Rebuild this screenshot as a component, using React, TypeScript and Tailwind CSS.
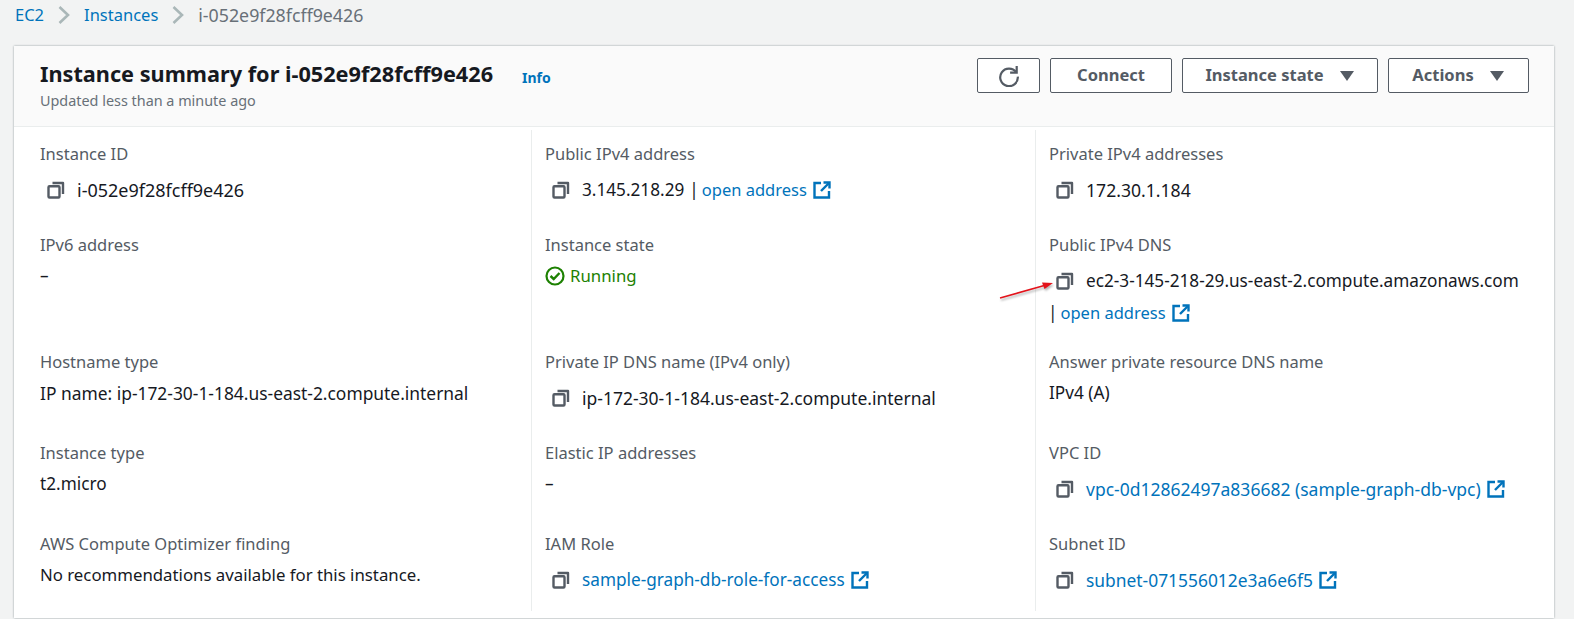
import React from "react";

type Cell = {
  label: string;
  value?: string;
  copy?: boolean;
  link?: string;
  address?: boolean;
  running?: boolean;
  size?: string;
};

const CopyIcon = () => (
  <svg width="18" height="18" viewBox="0 0 18 18" fill="none" stroke="#545b64" strokeWidth="2.4" className="shrink-0">
    <rect x="1.5" y="5.2" width="11" height="11.3" rx="1" />
    <path d="M5.5 2h10.5v11" strokeLinejoin="round" />
  </svg>
);

const ExternalIcon = () => (
  <svg width="18" height="18" viewBox="0 0 18 18" fill="none" stroke="#0073bb" strokeWidth="2.4" className="shrink-0">
    <path d="M8 2H1.5v14.5H16V10" />
    <path d="M10.5 1.5h6v6" />
    <path d="M16 2l-8 8" />
  </svg>
);

const CheckIcon = () => (
  <svg width="20" height="20" viewBox="0 0 20 20" fill="none" stroke="#1d8102" strokeWidth="2.2" className="shrink-0">
    <circle cx="10" cy="10" r="8.5" />
    <path d="M5.5 10l3.2 3 5.8-6" strokeWidth="2.4" />
  </svg>
);

const Caret = () => (
  <svg width="16" height="12" viewBox="0 0 16 12" className="shrink-0">
    <path d="M1 1h14L8 11z" fill="#545b64" />
  </svg>
);

const Chevron = () => (
  <svg width="12" height="18" viewBox="0 0 12 18" fill="none" stroke="#aab7b8" strokeWidth="2.6" className="mx-[14px]">
    <path d="M1.5 1l8.5 8-8.5 8" />
  </svg>
);

const cells: Cell[] = [
  { label: "Instance ID", value: "i-052e9f28fcff9e426", copy: true, size: "text-[18px]" },
  { label: "Public IPv4 address", value: "3.145.218.29", copy: true, address: true },
  { label: "Private IPv4 addresses", value: "172.30.1.184", copy: true, size: "text-[17.6px]" },
  { label: "IPv6 address", value: "–" },
  { label: "Instance state", running: true },
  { label: "Public IPv4 DNS" },
  { label: "Hostname type", value: "IP name: ip-172-30-1-184.us-east-2.compute.internal", size: "text-[17.4px]" },
  { label: "Private IP DNS name (IPv4 only)", value: "ip-172-30-1-184.us-east-2.compute.internal", copy: true, size: "text-[17.5px]" },
  { label: "Answer private resource DNS name", value: "IPv4 (A)" },
  { label: "Instance type", value: "t2.micro" },
  { label: "Elastic IP addresses", value: "–" },
  { label: "VPC ID", copy: true, link: "vpc-0d12862497a836682 (sample-graph-db-vpc)", size: "text-[17.5px]" },
  { label: "AWS Compute Optimizer finding", value: "No recommendations available for this instance.", size: "text-[16.8px]" },
  { label: "IAM Role", copy: true, link: "sample-graph-db-role-for-access" },
  { label: "Subnet ID", copy: true, link: "subnet-071556012e3a6e6f5", size: "text-[17.4px]" },
];

const rowHeights = ["h-[91px]", "h-[117px]", "h-[91px]", "h-[91px]", "h-[91px]"];

function Value({ cell }: { cell: Cell }) {
  if (cell.label === "Public IPv4 DNS") {
    return (
      <div className="mt-[12px]">
        <div className="flex items-center gap-[12px] pl-[7px] h-[24px]">
          <CopyIcon />
          <span className="text-[#16191f]">ec2-3-145-218-29.us-east-2.compute.amazonaws.com</span>
        </div>
        <div className="flex items-center gap-[3px] h-[24px] mt-[8px] -ml-[1px]">
          <span className="text-[#16191f]">|</span>
          <a className="text-[16.5px] text-[#0073bb]">open address</a>
          <span className="ml-[3px]"><ExternalIcon /></span>
        </div>
      </div>
    );
  }
  if (cell.running) {
    return (
      <div className="flex items-center gap-[5px] mt-[7px] h-[24px] text-[#1d8102]">
        <CheckIcon />
        <span className="text-[16.8px]">Running</span>
      </div>
    );
  }
  if (cell.copy) {
    return (
      <div className={`flex items-center gap-[12px] pl-[7px] mt-[12px] h-[24px] ${cell.size ?? ""}`}>
        <CopyIcon />
        {cell.link ? (
          <span className="flex items-center gap-[6px]">
            <a className="text-[#0073bb]">{cell.link}</a>
            <ExternalIcon />
          </span>
        ) : (
          <span className="flex items-center gap-[3px] text-[#16191f]">
            {cell.value}
            {cell.address && (
              <>
                <span className="ml-[2px]">|</span>
                <a className="text-[16.5px] text-[#0073bb]">open address</a>
                <span className="ml-[3px]"><ExternalIcon /></span>
              </>
            )}
          </span>
        )}
      </div>
    );
  }
  return <div className={`mt-[7px] h-[24px] leading-[24px] text-[#16191f] ${cell.size ?? ""}`}>{cell.value}</div>;
}

export default function App() {
  return (
    <div className="relative w-[1574px] h-[619px] overflow-hidden bg-[#f2f3f3] text-[17.2px] font-['Noto_Sans',sans-serif]">
      {/* Breadcrumbs */}
      <div className="flex items-center h-[30px] pl-[15px] text-[16.5px]">
        <a className="text-[#0073bb]">EC2</a>
        <Chevron />
        <a className="text-[#0073bb]">Instances</a>
        <Chevron />
        <span className="text-[17.8px] text-[#687078]">i-052e9f28fcff9e426</span>
      </div>

      {/* Card */}
      <div className="mt-[16px] ml-[14px] w-[1540px] bg-white shadow-[0_0_2px_rgba(0,28,36,0.4)]">
        <div className="flex justify-between h-[81px] bg-[#fafafa] border-b border-[#eaeded] pl-[26px] pr-[25px] pt-[12px]">
          <div className="pt-[1px]">
            <div className="flex items-center">
              <h1 className="text-[21.7px] leading-[30px] font-bold text-[#16191f]">Instance summary for i-052e9f28fcff9e426</h1>
              <a className="ml-[29px] mt-[6px] text-[14px] font-bold text-[#0073bb]">Info</a>
            </div>
            <div className="mt-[2px] text-[14.4px] leading-[20px] text-[#687078]">Updated less than a minute ago</div>
          </div>
          <div className="flex gap-[10px] text-[16.5px]">
            <button className="flex items-center justify-center w-[63px] h-[35px] bg-white border border-[#545b64] rounded-[2px]">
              <svg width="22" height="22" viewBox="0 0 20 20" fill="none" stroke="#545b64" strokeWidth="2">
                <path d="M16.5 6.5A8 8 0 1 0 18 10.5" />
                <path d="M17 1v6h-6" />
              </svg>
            </button>
            <button className="flex items-center justify-center w-[122px] h-[35px] bg-white border border-[#545b64] rounded-[2px] font-bold text-[#545b64]">
              Connect
            </button>
            <button className="flex items-center justify-center gap-[15px] w-[196px] h-[35px] bg-white border border-[#545b64] rounded-[2px] font-bold text-[#545b64]">
              Instance state
              <Caret />
            </button>
            <button className="flex items-center justify-center gap-[15px] w-[141px] h-[35px] bg-white border border-[#545b64] rounded-[2px] font-bold text-[#545b64]">
              Actions
              <Caret />
            </button>
          </div>
        </div>

        <div className="grid grid-cols-[517px_504px_1fr] pt-[3px] pb-[7px]">
          {cells.map((cell, i) => (
            <div
              key={cell.label}
              className={`${rowHeights[Math.floor(i / 3)]} pt-[12px] ${
                i % 3 === 0 ? "pl-[26px]" : "pl-[13px] border-l border-[#eaeded]"
              }`}
            >
              <div className="h-[24px] leading-[24px] text-[16.5px] text-[#545b64]">{cell.label}</div>
              <Value cell={cell} />
            </div>
          ))}
        </div>
      </div>

      {/* Red annotation arrow */}
      <svg width="60" height="24" viewBox="0 0 60 24" className="absolute left-[998px] top-[279px] drop-shadow-[1px_2px_1px_rgba(0,0,0,0.3)]">
        <path d="M2 19L48 6" stroke="#e3131b" strokeWidth="1.6" />
        <path d="M55 4L44 3.5l2.5 6.5z" fill="#e3131b" />
      </svg>
    </div>
  );
}
